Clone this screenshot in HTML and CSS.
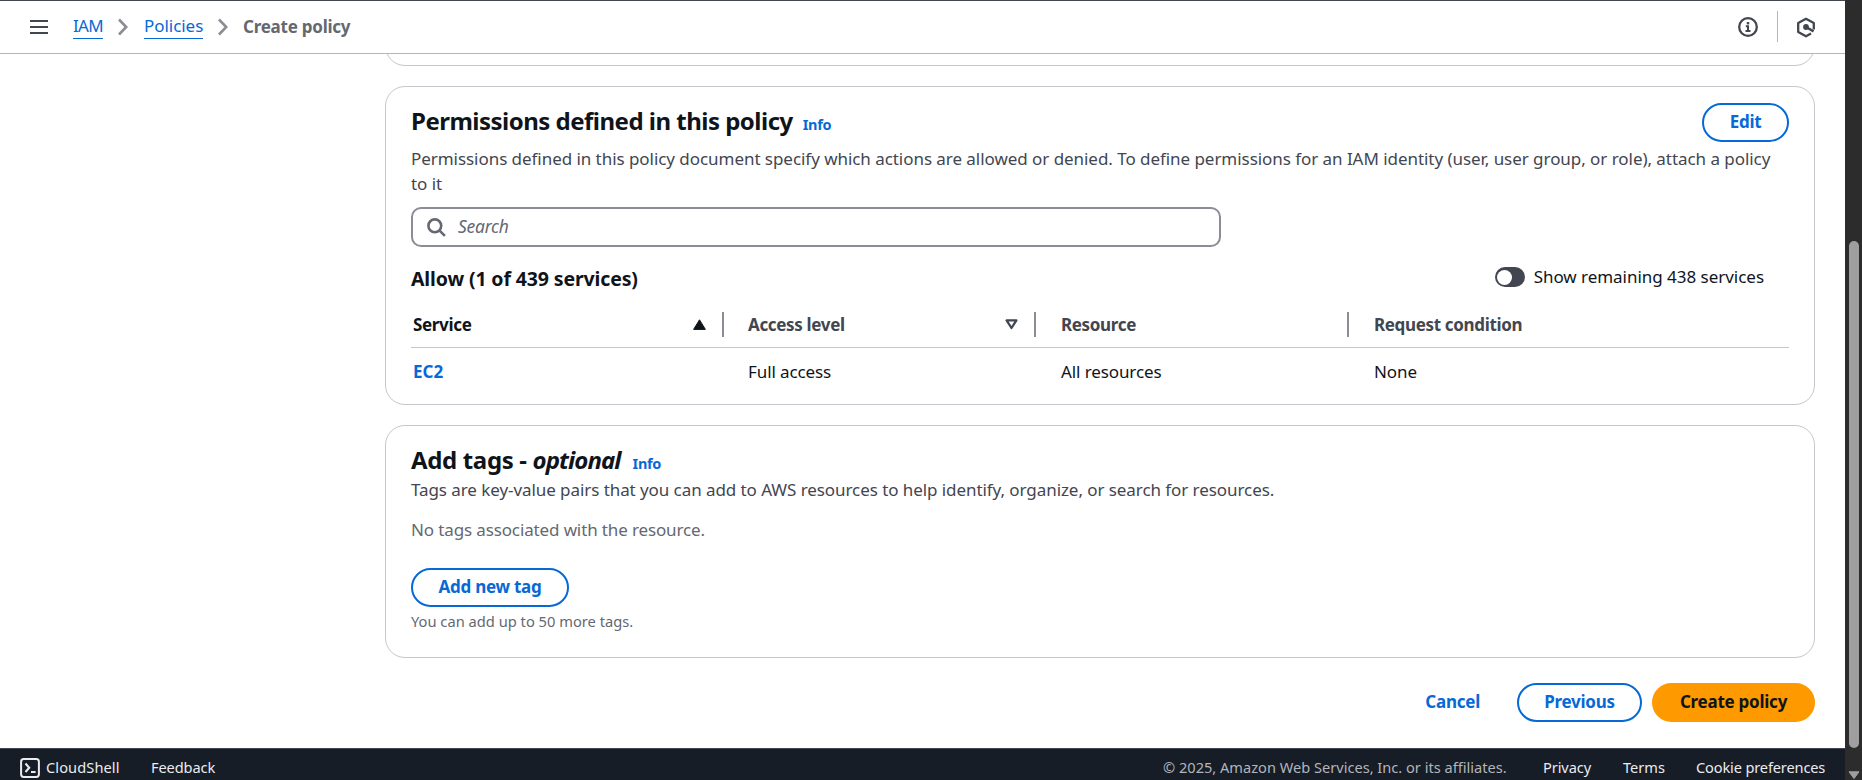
FILE: index.html
```
<!DOCTYPE html>
<html lang="en">
<head>
<meta charset="utf-8">
<title>Create policy | IAM</title>
<link rel="stylesheet" href="styles.css">
</head>
<body>
<div class="app">
  <div class="page">
    <header class="topbar">
      <svg class="menu" width="18" height="16" viewBox="0 0 18 16"><path d="M0 2h18M0 8h18M0 14h18" stroke="#424650" stroke-width="2"/></svg>
      <nav class="crumbs">
        <a class="crumb crumb-iam">IAM</a>
        <svg class="chev" width="10" height="18" viewBox="0 0 10 18"><path d="M1 1.5l7.2 7.5L1 16.5" fill="none" stroke="#8c8c94" stroke-width="2.6"/></svg>
        <a class="crumb crumb-pol">Policies</a>
        <svg class="chev" width="10" height="18" viewBox="0 0 10 18"><path d="M1 1.5l7.2 7.5L1 16.5" fill="none" stroke="#8c8c94" stroke-width="2.6"/></svg>
        <span class="current">Create policy</span>
      </nav>
      <div class="tools">
        <svg width="20" height="20" viewBox="0 0 20 20"><circle cx="10" cy="10" r="8.8" fill="none" stroke="#424650" stroke-width="2.3"/><path d="M10 5v2.4" stroke="#424650" stroke-width="2.5"/><path d="M7.8 9.2H10V14M7.5 14.1h5" fill="none" stroke="#424650" stroke-width="2"/></svg>
        <span class="tool-sep"></span>
        <svg width="20" height="21" viewBox="0 0 20 21"><path d="M17.8 12.5V6L10 1.8 2.2 6v9l7.8 4.3 5-2.7" fill="none" stroke="#424650" stroke-width="2.3" stroke-linejoin="round"/><circle cx="10" cy="10" r="2.9" fill="#424650"/><path d="M10 10l7.6 4.4" fill="none" stroke="#424650" stroke-width="2.4"/></svg>
      </div>
    </header>

    <main class="content">
      <section class="card card-prev"></section>

      <section class="card card-perm">
        <div class="head">
          <h2 class="title title-perm">Permissions defined in this policy</h2>
          <a class="info">Info</a>
          <button class="btn btn-edit">Edit</button>
        </div>
        <p class="desc">Permissions defined in this policy document specify which actions are allowed or denied. To define permissions for an IAM identity (user, user group, or role), attach a policy<br>to it</p>
        <div class="search">
          <svg width="19" height="19" viewBox="0 0 19 19"><circle cx="7.8" cy="7.8" r="6.4" fill="none" stroke="#656871" stroke-width="2.6"/><path d="M12.3 12.3l5.6 5.6" stroke="#656871" stroke-width="2.6"/></svg>
          <span class="placeholder">Search</span>
        </div>
        <div class="allow">
          <h3 class="allow-title">Allow (1 of 439 services)</h3>
          <span class="toggle"><span class="knob"></span></span>
          <span class="toggle-label">Show remaining 438 services</span>
        </div>
        <div class="table">
          <div class="tr th-row">
            <div class="th th-active">Service<svg class="sort" width="13" height="11" viewBox="0 0 13 11"><path d="M6.5 .8L12.4 10.4H.6z" fill="#0f141a" stroke="#0f141a" stroke-linejoin="round"/></svg></div>
            <div class="th">Access level<svg class="sort" width="13" height="11" viewBox="0 0 13 11"><path d="M1.6 1.4h9.8L6.5 9z" fill="none" stroke="#424650" stroke-width="2.3" stroke-linejoin="round"/></svg></div>
            <div class="th">Resource</div>
            <div class="th">Request condition</div>
          </div>
          <div class="tr">
            <div class="td"><a class="ec2">EC2</a></div>
            <div class="td">Full access</div>
            <div class="td">All resources</div>
            <div class="td">None</div>
          </div>
        </div>
      </section>

      <section class="card card-tags">
        <div class="head head-tags">
          <h2 class="title">Add tags - <i class="optional">optional</i></h2>
          <a class="info">Info</a>
        </div>
        <p class="tags-desc">Tags are key-value pairs that you can add to AWS resources to help identify, organize, or search for resources.</p>
        <p class="empty">No tags associated with the resource.</p>
        <button class="btn btn-add">Add new tag</button>
        <p class="hint">You can add up to 50 more tags.</p>
      </section>

      <div class="actions">
        <a class="cancel">Cancel</a>
        <button class="btn btn-previous">Previous</button>
        <button class="btn btn-primary">Create policy</button>
      </div>
    </main>

    <footer class="footer">
      <svg width="20" height="20" viewBox="0 0 20 20"><rect x="1.1" y="1.1" width="17.8" height="17.8" rx="2.6" fill="none" stroke="#ebebf0" stroke-width="2"/><path d="M5.5 5.5L9.2 9.7 5.5 14M11 14h4.6" fill="none" stroke="#ebebf0" stroke-width="2.1"/></svg>
      <a class="f-shell">CloudShell</a>
      <a class="f-feedback">Feedback</a>
      <span class="copy">© 2025, Amazon Web Services, Inc. or its affiliates.</span>
      <a class="f-privacy">Privacy</a>
      <a class="f-terms">Terms</a>
      <a class="f-cookie">Cookie preferences</a>
    </footer>
  </div>
  <aside class="scrollbar">
    <div class="thumb"></div>
    <svg width="12" height="8" viewBox="0 0 12 8"><path d="M1 .8h10L6 7.6z" fill="#9f9f9f" stroke="#9f9f9f" stroke-linejoin="round"/></svg>
  </aside>
</div>
</body>
</html>
```
FILE: styles.css
```
* { box-sizing: border-box; }
body { margin: 0; background: #fff; color: #0f141a; font: 17px/25px "Noto Sans", "Open Sans", sans-serif; letter-spacing: -0.05px; overflow: hidden; }
h2, h3, p { margin: 0; }
svg { display: block; flex: none; }
a { color: #0769d6; }
.app { display: flex; height: 780px; }
.page { width: 1845px; height: 780px; display: flex; flex-direction: column; overflow: hidden; }

.topbar { flex: none; height: 54px; border-top: 1px solid #424650; border-bottom: 1px solid #b4b4bb; display: flex; align-items: center; padding: 0 29px 0 30px; white-space: nowrap; }
.crumbs { display: flex; align-items: center; margin-left: 25px; }
.crumb { border-bottom: 1px solid #0769d6; line-height: 22px; height: 24px; }
.crumb-iam { width: 30px; letter-spacing: -0.7px; }
.crumb-pol { width: 59px; }
.chev { margin: 0 15px; }
.crumb-iam + .chev { margin-right: 16px; }
.current { color: #656871; font-weight: 700; letter-spacing: -0.24px; margin-top: -2px; }
.tools { margin-left: auto; display: flex; align-items: center; }
.tool-sep { width: 1px; height: 31px; background: #b4b4bb; margin: -1px 18px 0 19px; }

.content { flex: none; height: 694px; padding-left: 385px; width: 1815px; overflow: hidden; display: flex; flex-direction: column; }
.card { flex: none; border: 1px solid #c6c6cd; border-radius: 20px; padding: 0 25px; }
.card-prev { height: 80px; margin-top: -68px; margin-bottom: 20px; }
.card-perm { height: 319px; padding-top: 16px; }
.card-tags { height: 233px; margin-top: 20px; padding-top: 19px; }
.head { display: flex; height: 40px; }
.head-tags { height: 30px; }
.title { font-size: 24px; line-height: 30px; font-weight: 700; letter-spacing: -0.35px; white-space: nowrap; }
.title-perm { margin-top: 3px; letter-spacing: -0.51px; }
.optional { letter-spacing: -0.9px; }
.info { font-size: 14.5px; font-weight: 700; line-height: 20px; letter-spacing: -0.3px; margin: 11px 0 0 10px; }
.head-tags .info { margin-top: 8px; margin-left: 12px; }
.btn { height: 39px; border: 2px solid #0769d6; border-radius: 20px; background: #fff; color: #0769d6; font: 700 17px/25px "Noto Sans", sans-serif; letter-spacing: -0.25px; padding: 0 0 2px; white-space: nowrap; flex: none; }
.btn-edit { width: 87px; margin-left: auto; }
.desc { color: #424650; margin-top: 3px; white-space: nowrap; }
.search { width: 810px; height: 40px; margin-top: 11px; border: 2px solid #8c8c94; border-radius: 10px; display: flex; align-items: center; padding-left: 14px; }
.placeholder { color: #656871; font-style: italic; font-size: 17.4px; letter-spacing: -0.2px; margin-left: 12px; padding-bottom: 2px; }
.allow { display: flex; margin-top: 19px; height: 25px; }
.allow-title { font-size: 19.5px; letter-spacing: -0.13px; }
.toggle { width: 30px; height: 20px; border-radius: 10px; background: #424650; margin: 1px 9px 0 auto; padding: 2.5px; }
.knob { display: block; width: 15px; height: 15px; border-radius: 50%; background: #fff; }
.toggle-label { margin-top: -2px; margin-right: 25px; white-space: nowrap; letter-spacing: -0.03px; }
.table { margin-top: 11px; }
.tr { display: grid; grid-template-columns: 312px 313px 313px 1fr; padding-top: 11px; }
.th-row { height: 46px; border-bottom: 1px solid #c6c6cd; padding-top: 10px; grid-template-columns: 313px 312px 313px 1fr; }
.th, .td { padding-left: 25px; }
.th { display: flex; align-items: center; height: 25px; font-weight: 700; color: #424650; letter-spacing: -0.34px; border-right: 2px solid #8c8c94; }
.th:nth-child(2) { padding-left: 24px; }
.th:first-child, .td:first-child { padding-left: 2px; }
.th:last-child { border-right: 0; }
.th-active { color: #0f141a; }
.sort { margin-left: auto; margin-right: 16px; }
.td { letter-spacing: -0.1px; }
.ec2 { font-weight: 700; letter-spacing: 0; }

.tags-desc { color: #424650; margin-top: 2px; letter-spacing: -0.07px; }
.empty { color: #656871; margin-top: 15px; letter-spacing: -0.13px; }
.btn-add { width: 158px; margin-top: 26px; display: block; }
.hint { color: #656871; font-size: 14.7px; line-height: 20px; margin-top: 4px; letter-spacing: 0; }
.actions { display: flex; align-items: center; justify-content: flex-end; margin-top: 25px; }
.cancel { font-weight: 700; letter-spacing: -0.25px; margin-right: 37px; padding-bottom: 2px; }
.btn-previous { width: 125px; }
.btn-primary { width: 163px; background: #ff9900; border-color: #ff9900; color: #0f141a; margin-left: 10px; }

.footer { flex: none; height: 38px; background: #161d26; border-top: 1px solid #424650; display: flex; align-items: center; padding: 0 20px; font-size: 14.6px; white-space: nowrap; letter-spacing: 0; color: #b4b4bb; }
.footer a { color: #ebebf0; }
.f-shell { margin-left: 6px; width: 74px; letter-spacing: 0.1px; }
.f-feedback { margin-left: 31px; letter-spacing: -0.1px; }
.copy { margin-left: auto; width: 343px; }
.f-privacy { width: 49px; margin-left: 37px; letter-spacing: -0.1px; }
.f-terms { width: 42px; margin-left: 31px; }
.f-cookie { width: 129px; margin-left: 31px; letter-spacing: -0.15px; }

.scrollbar { width: 17px; height: 780px; background: #2c2c2c; display: flex; flex-direction: column; align-items: center; justify-content: flex-end; }
.thumb { width: 10px; height: 507px; border-radius: 5px; background: #9f9f9f; margin-bottom: 23px; }
.scrollbar svg { margin-bottom: 1px; }
```
